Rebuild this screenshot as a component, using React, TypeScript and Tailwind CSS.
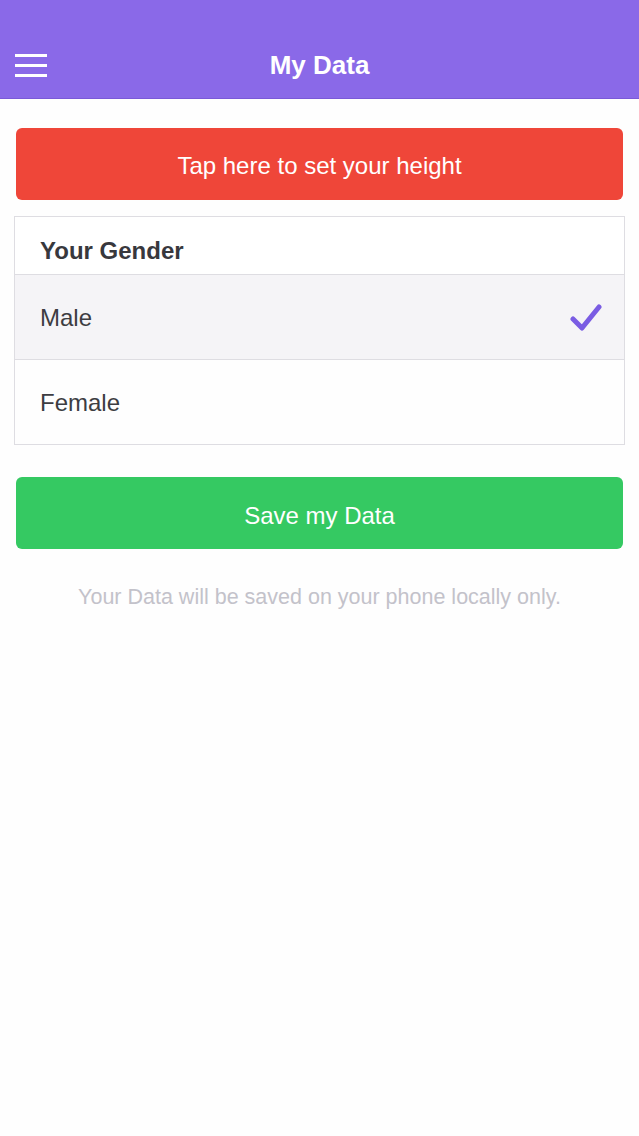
import React from 'react';

const font = { fontFamily: '"Liberation Sans", Arial, sans-serif' };

const CheckIcon = () => (
    <svg width="32" height="30" viewBox="0 0 32 30" fill="none">
        <path d="M3 17 L12 26 L29 5" stroke="#7a5ce3" strokeWidth="5" strokeLinecap="round" strokeLinejoin="round" />
    </svg>
);

const App = () => {
    const [gender, setGender] = React.useState<'Male' | 'Female'>('Male');

    return (
        <div className="w-[639px] h-[1136px] bg-[#fefefe] flex flex-col" style={font}>
            <header className="h-[99px] bg-[#8a69e8] border-b border-[#7a59d8] flex items-end pb-[21px] px-[15px] relative">
                <button className="w-[32px] h-[23px] flex flex-col justify-between">
                    <span className="block h-[3px] w-full bg-white" />
                    <span className="block h-[3px] w-full bg-white" />
                    <span className="block h-[3px] w-full bg-white" />
                </button>
                <h1 className="absolute left-0 right-0 bottom-[18px] text-center text-white text-[26px] font-bold leading-[30px]">My Data</h1>
            </header>

            <div className="flex flex-col px-[15px] pt-[29px]">
                <button className="mx-[1px] h-[72px] pt-[3px] rounded-[6px] bg-[#ef4639] text-white text-[24px] flex items-center justify-center">
                    Tap here to set your height
                </button>

                <div className="mt-[16px] -mx-[1px] border border-[#dedde2] bg-white">
                    <div className="h-[58px] pt-[10px] flex items-center px-[25px] border-b border-[#dedde2]">
                        <span className="text-[24px] font-bold text-[#38383d]">Your Gender</span>
                    </div>
                    {(['Male', 'Female'] as const).map((g, i) => (
                        <div
                            key={g}
                            onClick={() => setGender(g)}
                            className={`flex items-center justify-between pl-[25px] pr-[22px] ${i === 0 ? 'h-[85px] border-b border-[#dedde2]' : 'h-[84px]'} ${gender === g ? 'bg-[#f5f4f7]' : 'bg-[#fefefe]'}`}
                        >
                            <span className="text-[24px] text-[#3d3d42] pt-[2px]">{g}</span>
                            {gender === g && <CheckIcon />}
                        </div>
                    ))}
                </div>

                <button className="mt-[32px] mx-[1px] h-[72px] pt-[6px] rounded-[6px] bg-[#35c962] text-white text-[24px] flex items-center justify-center">
                    Save my Data
                </button>

                <p className="mt-[32px] text-center text-[21.5px] text-[#c3c2ca]">Your Data will be saved on your phone locally only.</p>
            </div>
        </div>
    );
};

export default App;
